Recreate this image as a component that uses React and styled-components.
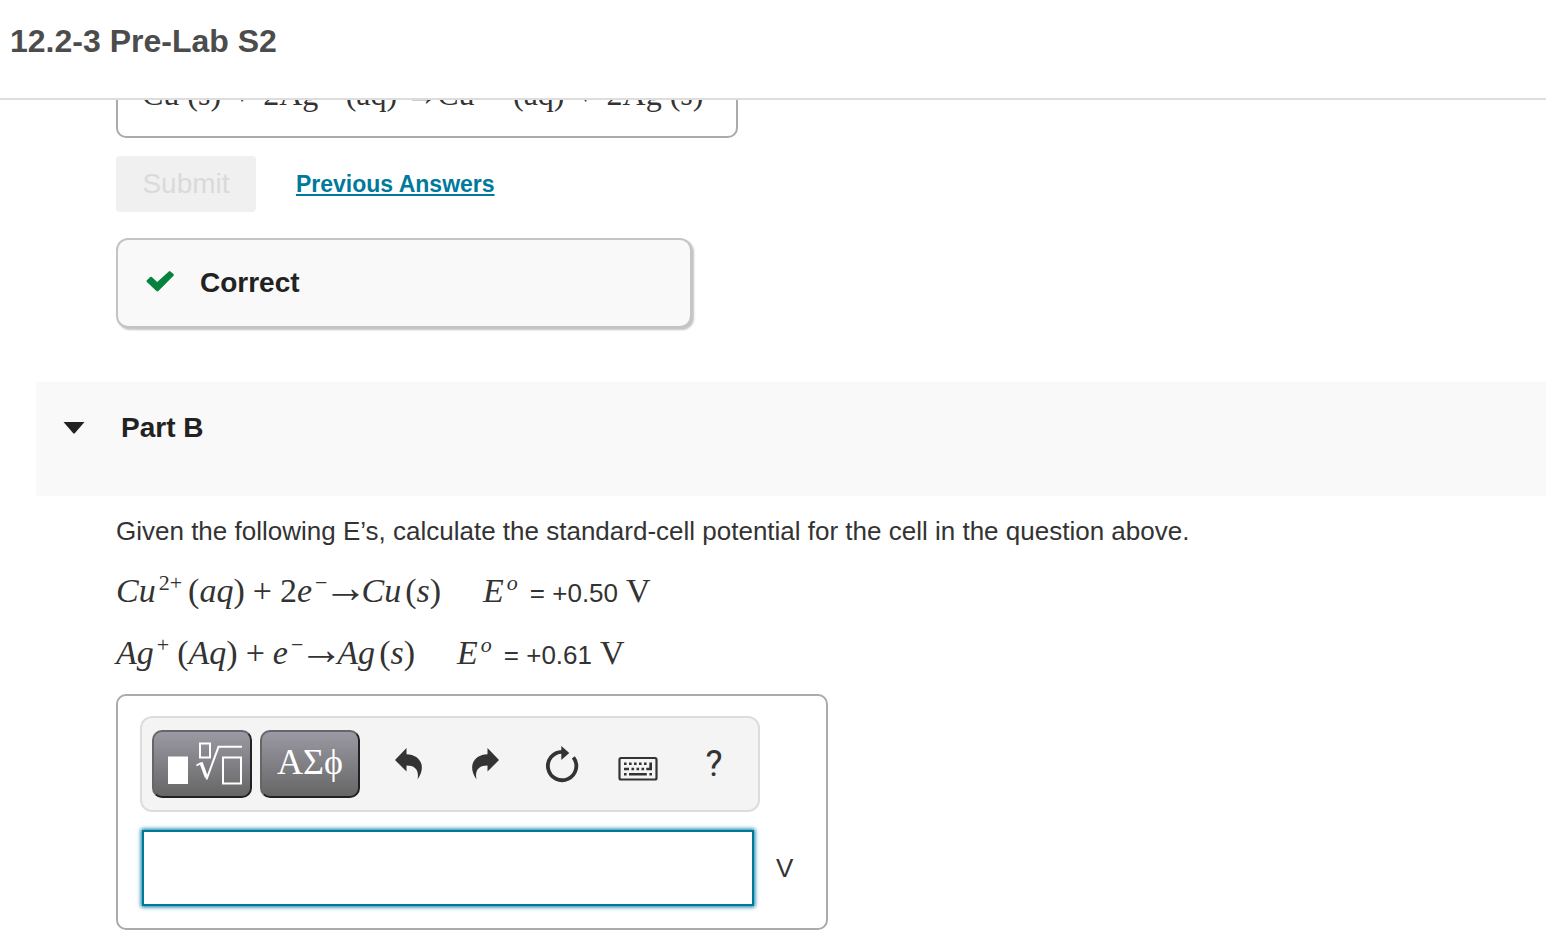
import React, { useState } from "react";
import styled, { createGlobalStyle } from "styled-components";

const equations = [
  {
    left: [
      { text: "Cu", sup: "2+" },
      { text: "aq", parens: true, gap: 6 },
      { text: "+", gap: 8, plain: true },
      { text: "2", gap: 8, plain: true },
      { text: "e", sup: "−" },
      { arrow: true },
      { text: "Cu" },
      { text: "s", parens: true, gap: 4 },
    ],
    value: "= +0.50",
  },
  {
    left: [
      { text: "Ag", sup: "+" },
      { text: "Aq", parens: true, gap: 8 },
      { text: "+", gap: 8, plain: true },
      { text: "e", sup: "−", gap: 8 },
      { arrow: true },
      { text: "Ag" },
      { text: "s", parens: true, gap: 4 },
    ],
    value: "= +0.61",
  },
];

const previousAnswer = [
  { text: "Cu" },
  { text: "(s)", gap: 8 },
  { text: "+", gap: 12 },
  { text: "2Ag", sup: "+", gap: 12 },
  { text: "(aq)", gap: 12 },
  { text: "→", gap: 8 },
  { text: "Cu", sup: "2+" },
  { text: "(aq)", gap: 12 },
  { text: "+", gap: 12 },
  { text: "2Ag", gap: 12 },
  { text: "(s)", gap: 8 },
];

export default function App() {
  const [answer, setAnswer] = useState("");

  const handleSubmit = (event) => {
    event.preventDefault();
  };

  const renderTerm = (term, i) => {
    if (term.arrow) return <Arrow key={i}>→</Arrow>;
    return (
      <Term key={i} $gap={term.gap} $plain={term.plain}>
        {term.parens && <Paren>(</Paren>}
        {term.text}
        {term.parens && <Paren>)</Paren>}
        {term.sup && <Sup>{term.sup}</Sup>}
      </Term>
    );
  };

  const renderEquation = (equation, i) => (
    <MathLine key={i}>
      {equation.left.map(renderTerm)}
      <Term $gap={42}>
        E<Sup $italic>o</Sup>
      </Term>
      <Value>{equation.value}</Value>
      <Term $gap={8} $plain>
        V
      </Term>
    </MathLine>
  );

  return (
    <>
      <GlobalStyle />
      <Header>
        <Title>12.2-3 Pre-Lab S2</Title>
      </Header>
      <main>
        <PartBody>
          <PreviousBox>
            <PreviousLine>
              {previousAnswer.map((term, i) =>
                renderTerm({ ...term, plain: true }, i)
              )}
            </PreviousLine>
          </PreviousBox>
          <Actions>
            <Submit disabled>Submit</Submit>
            <AnswersLink href="#previous">Previous Answers</AnswersLink>
          </Actions>
          <Feedback>
            <CheckIcon />
            Correct
          </Feedback>
        </PartBody>

        <PartHeader>
          <Toggle aria-label="Collapse Part B">
            <svg width="22" height="12" viewBox="0 0 22 12">
              <path d="M0.5 0H21.5L12 11Q11 12 10 11Z" fill="#222" />
            </svg>
          </Toggle>
          <PartTitle>Part B</PartTitle>
        </PartHeader>

        <PartBody>
          <Question>
            Given the following E’s, calculate the standard-cell potential for
            the cell in the question above.
          </Question>
          <Equations>{equations.map(renderEquation)}</Equations>
          <AnswerBox onSubmit={handleSubmit}>
            <Toolbar>
              <PaletteButton type="button" aria-label="Templates">
                <TemplateIcon />
              </PaletteButton>
              <PaletteButton type="button" $text>
                ΑΣϕ
              </PaletteButton>
              <Tools>
                <ToolButton type="button" aria-label="Undo">
                  <UndoIcon />
                </ToolButton>
                <ToolButton type="button" aria-label="Redo">
                  <RedoIcon />
                </ToolButton>
                <ToolButton type="button" aria-label="Reset">
                  <ResetIcon />
                </ToolButton>
                <ToolButton type="button" aria-label="Keyboard shortcuts">
                  <KeyboardIcon />
                </ToolButton>
                <ToolButton type="button">?</ToolButton>
              </Tools>
            </Toolbar>
            <AnswerRow>
              <AnswerInput
                id="answer"
                value={answer}
                onChange={(event) => setAnswer(event.target.value)}
              />
              <Unit htmlFor="answer">V</Unit>
            </AnswerRow>
          </AnswerBox>
        </PartBody>
      </main>
    </>
  );
}

const CheckIcon = () => (
  <svg width="28" height="24" viewBox="0 0 28 24">
    <path
      d="M0.9 11Q0.1 10.1 0.9 9.3L4.2 6.1Q5 5.4 5.8 6.1L11.2 11.1L22.8 0.4Q23.6 -0.3 24.4 0.4L27.5 3.1Q28.2 3.9 27.5 4.7L12.4 20Q11.4 20.9 10.4 20Z"
      fill="#05823d"
    />
  </svg>
);

const TemplateIcon = () => (
  <svg width="80" height="46" viewBox="0 0 80 46" fill="none" stroke="#fff">
    <rect x="6" y="15.5" width="20" height="27.5" fill="#fff" stroke="none" />
    <rect x="38" y="2.5" width="10" height="14" strokeWidth="2" />
    <path d="M34.5 24.5L39 22" strokeWidth="2" />
    <path d="M39 21.5L44.5 36.5" strokeWidth="3.4" />
    <path d="M44.5 38.5L56.5 5.8H80" strokeWidth="2" />
    <rect x="61" y="16.5" width="18" height="26" strokeWidth="2" />
  </svg>
);

const arrowPath =
  "M7 18L18.5 6V12.2C32 12.6 39 24 29.5 37.4C31.4 28 27 23.6 18.5 23.6V29.6Z";

const UndoIcon = () => (
  <svg width="44" height="44" viewBox="0 0 44 44">
    <path d={arrowPath} fill="#333" />
  </svg>
);

const RedoIcon = () => (
  <svg width="44" height="44" viewBox="0 0 44 44">
    <path d={arrowPath} fill="#333" transform="matrix(-1 0 0 1 42 0)" />
  </svg>
);

const ResetIcon = () => (
  <svg width="44" height="44" viewBox="0 0 44 44">
    <path
      d="M33.4 15.4A14.2 14.2 0 1 1 22 9.8"
      fill="none"
      stroke="#333"
      strokeWidth="3.8"
    />
    <path d="M21.3 4L29.3 11L21.3 18Z" fill="#333" />
  </svg>
);

const KeyboardIcon = () => (
  <svg width="44" height="44" viewBox="1 0 44 44" fill="#333">
    <rect
      x="4.5"
      y="16"
      width="37"
      height="21.5"
      rx="1.5"
      fill="none"
      stroke="#333"
      strokeWidth="2.2"
    />
    <path d="M9 20.5h2.6v2.6H9zM14 20.5h2.6v2.6H14zM19 20.5h2.6v2.6H19zM24 20.5h2.6v2.6H24zM29 20.5h2.6v2.6H29z" />
    <path d="M9 25.8h5v2.4H9zM16.5 25.8h2.6v2.4h-2.6zM21.5 25.8h2.6v2.4h-2.6zM26.5 25.8h2.6v2.4h-2.6z" />
    <path d="M34.3 20.5H37v7.7h-5.7v-2.4h3z" />
    <path d="M9 31h2.6v2.4H9zM14 31h17.8v2.4H14zM34.4 31H37v2.4h-2.6z" />
  </svg>
);

const GlobalStyle = createGlobalStyle`
  *, *::before, *::after {
    box-sizing: border-box;
  }

  body {
    margin: 0;
    background: #fff;
    color: #333;
    font-family: "Liberation Sans", Arial, sans-serif;
    font-size: 26px;
    line-height: 32px;
  }
`;

const Header = styled.header`
  padding: 21px 10px 37px;
  border-bottom: 2px solid #ddd;
`;

const Title = styled.h1`
  margin: 0;
  color: #4c4c4c;
  font-size: 32px;
  line-height: 40px;
`;

const PartBody = styled.section`
  padding: 0 36px 0 116px;
`;

const PreviousBox = styled.div`
  display: flex;
  align-items: flex-end;
  max-width: 622px;
  height: 38px;
  padding: 0 24px 26px;
  overflow: hidden;
  border: 2px solid #aaa;
  border-top: 0;
  border-radius: 0 0 10px 10px;
`;

const MathLine = styled.div`
  display: flex;
  align-items: baseline;
  height: 38px;
  font-family: "Liberation Serif", "Times New Roman", serif;
  font-size: 34px;
  line-height: 38px;
  white-space: nowrap;
`;

const PreviousLine = styled(MathLine)`
  height: 32px;
  font-size: 32px;
  line-height: 32px;
`;

const Equations = styled.div`
  display: flex;
  flex-direction: column;
  gap: 24px;
  margin-bottom: 22px;
`;

const Term = styled.span`
  margin-left: ${(props) => props.$gap || 0}px;
  font-style: ${(props) => (props.$plain ? "normal" : "italic")};
`;

const Paren = styled.span`
  font-style: normal;
`;

const Arrow = styled.span`
  margin: 0 -6px 0 -4px;
  font-size: 44px;
  line-height: 24px;
`;

const Sup = styled.sup`
  margin-left: 3px;
  font-size: 22px;
  font-style: ${(props) => (props.$italic ? "italic" : "normal")};
  line-height: 0;
`;

const Value = styled.span`
  margin-left: 12px;
  font-family: "Liberation Sans", Arial, sans-serif;
  font-size: 26px;
`;

const Actions = styled.div`
  display: flex;
  align-items: center;
  gap: 40px;
  margin-top: 18px;
`;

const Submit = styled.button`
  width: 140px;
  height: 56px;
  border: 0;
  border-radius: 4px;
  background: #f0f0f0;
  color: #dadada;
  font-family: inherit;
  font-size: 28px;
`;

const AnswersLink = styled.a`
  color: #007a9c;
  font-size: 23px;
  font-weight: bold;
  text-decoration-thickness: 2px;
  text-underline-offset: 2px;
`;

const Feedback = styled.div`
  display: flex;
  align-items: center;
  gap: 26px;
  max-width: 576px;
  height: 90px;
  margin: 26px 0 54px;
  padding: 0 28px;
  border: 2px solid #c4c4c4;
  border-radius: 12px;
  background: #f9f9f9;
  box-shadow: 2px 2px 2px #c4c4c4;
  color: #222;
  font-size: 28px;
  font-weight: bold;
`;

const PartHeader = styled.header`
  display: flex;
  align-items: flex-start;
  gap: 36px;
  margin-left: 36px;
  padding: 30px 27px 52px;
  background: #f9f9f9;
`;

const Toggle = styled.button`
  display: flex;
  align-items: center;
  height: 32px;
  padding: 0;
  border: 0;
  background: none;
`;

const PartTitle = styled.h2`
  margin: 0;
  color: #222;
  font-size: 28px;
  line-height: 32px;
`;

const Question = styled.p`
  margin: 19px 0 25px;
`;

const AnswerBox = styled.form`
  max-width: 712px;
  margin-bottom: 18px;
  padding: 20px 22px 22px;
  border: 2px solid #aaa;
  border-radius: 10px;
`;

const Toolbar = styled.div`
  display: flex;
  align-items: center;
  gap: 8px;
  max-width: 620px;
  height: 96px;
  padding-left: 10px;
  border: 2px solid #ddd;
  border-radius: 12px;
  background: #f4f4f4;
`;

const PaletteButton = styled.button`
  display: flex;
  flex: none;
  align-items: center;
  justify-content: center;
  width: 100px;
  height: 68px;
  padding: 0 0 ${(props) => (props.$text ? 4 : 0)}px;
  border: 2px solid;
  border-color: #666 #222 #222 #666;
  border-radius: 10px;
  background: linear-gradient(#9b99a3, #666);
  color: #fff;
  font-family: "Liberation Serif", "Times New Roman", serif;
  font-size: 36px;
`;

const Tools = styled.div`
  display: flex;
  margin-left: 4px;
`;

const ToolButton = styled.button`
  display: flex;
  flex: none;
  align-items: center;
  justify-content: center;
  width: 76px;
  height: 68px;
  padding: 0;
  border: 0;
  background: none;
  color: #333;
  font-family: Roboto, sans-serif;
  font-size: 36px;
`;

const AnswerRow = styled.div`
  display: flex;
  align-items: center;
  gap: 22px;
  margin-top: 18px;
  padding-left: 2px;
`;

const AnswerInput = styled.input`
  flex: 0 1 612px;
  min-width: 0;
  height: 76px;
  padding: 0 12px;
  border: 2px solid #007a9c;
  outline: 0;
  box-shadow: 0 0 4px 1px #007a9c;
  font: inherit;
`;

const Unit = styled.label`
  line-height: 32px;
`;
